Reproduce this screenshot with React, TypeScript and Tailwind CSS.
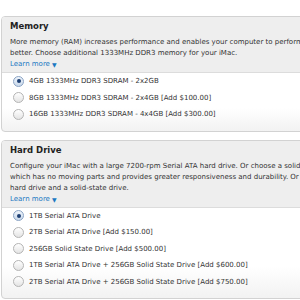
const memoryOptions = [
  { label: "4GB 1333MHz DDR3 SDRAM - 2x2GB", selected: true },
  { label: "8GB 1333MHz DDR3 SDRAM - 2x4GB [Add $100.00]" },
  { label: "16GB 1333MHz DDR3 SDRAM - 4x4GB [Add $300.00]" },
];

const driveOptions = [
  { label: "1TB Serial ATA Drive", selected: true },
  { label: "2TB Serial ATA Drive [Add $150.00]" },
  { label: "256GB Solid State Drive [Add $500.00]" },
  { label: "1TB Serial ATA Drive + 256GB Solid State Drive [Add $600.00]" },
  { label: "2TB Serial ATA Drive + 256GB Solid State Drive [Add $750.00]" },
];

function Radio({ selected }: { selected?: boolean }) {
  return (
    <span
      className={
        "flex w-[11px] h-[11px] shrink-0 items-center justify-center rounded-full border " +
        (selected
          ? "border-[#8aa3c4] bg-gradient-to-b from-[#eef4fb] to-[#c9d8ea]"
          : "border-[#b4b4b4] bg-gradient-to-b from-[#ffffff] to-[#e4e4e4]")
      }
    >
      {selected && <span className="w-[4px] h-[4px] rounded-full bg-[#1d3f73]" />}
    </span>
  );
}

function Section({
  title,
  lines,
  options,
}: {
  title: string;
  lines: string[];
  options: { label: string; selected?: boolean }[];
}) {
  return (
    <div className="w-[420px] rounded-[4px] border border-[#d2d2d2] overflow-hidden bg-gradient-to-b from-white from-80% to-[#f2f2f2]">
      <div className="bg-[#eeeeee] border-b border-[#dcdcdc] pl-[8px] pt-[3px] pb-[2px]">
        <div className="text-[8.5px] leading-[12px] font-bold text-[#222]">{title}</div>
        <div className="mt-[5px] text-[7px] leading-[11px] text-[#333]">
          {lines.map((l, i) => (
            <div key={i} className="whitespace-nowrap">
              {l}
            </div>
          ))}
          <div className="flex items-center gap-[2px] text-[#1a78c2]">
            Learn more
            <span className="text-[6px]">▼</span>
          </div>
        </div>
      </div>
      <div className="flex flex-col pt-0 pb-[8px]">
        {options.map((o, i) => (
          <div key={i} className="flex items-center h-[16.5px] pl-[11px] gap-[5px]">
            <Radio selected={o.selected} />
            <span className="text-[7px] text-[#333] whitespace-nowrap">{o.label}</span>
          </div>
        ))}
      </div>
    </div>
  );
}

export default function App() {
  return (
    <div
      className="w-[300px] h-[300px] overflow-hidden bg-white pt-[16px] pl-[1px] flex flex-col gap-[8px]"
      style={{ fontFamily: '"DejaVu Sans", "Lucida Grande", sans-serif' }}
    >
      <Section
        title="Memory"
        lines={[
          "More memory (RAM) increases performance and enables your computer to perform",
          "better. Choose additional 1333MHz DDR3 memory for your iMac.",
        ]}
        options={memoryOptions}
      />
      <Section
        title="Hard Drive"
        lines={[
          "Configure your iMac with a large 7200-rpm Serial ATA hard drive. Or choose a solid-state drive,",
          "which has no moving parts and provides greater responsiveness and durability. Or select both a",
          "hard drive and a solid-state drive.",
        ]}
        options={driveOptions}
      />
    </div>
  );
}
